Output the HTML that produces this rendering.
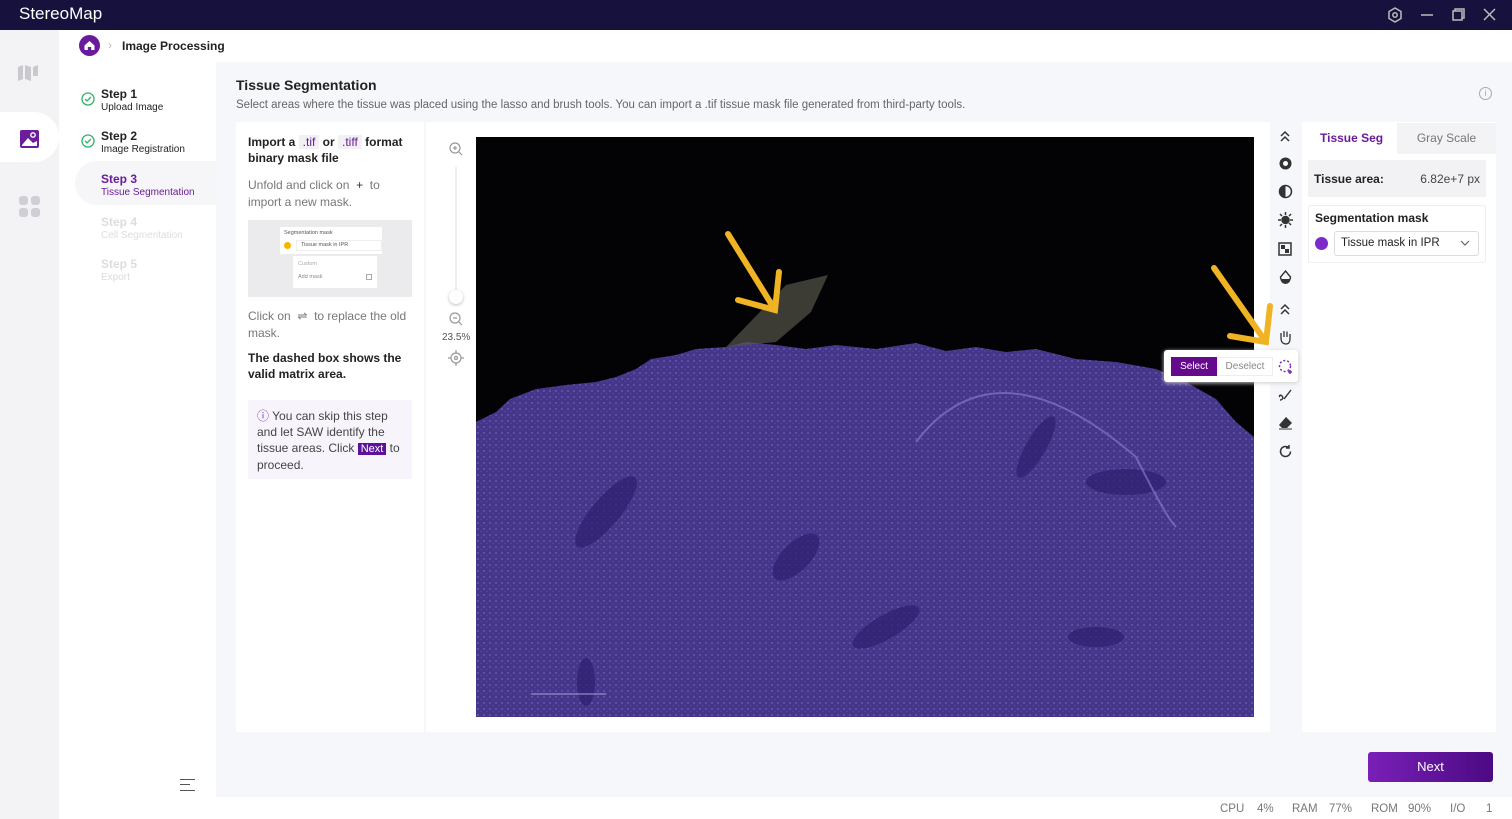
<!DOCTYPE html>
<html><head><meta charset="utf-8"><style>
*{box-sizing:border-box;margin:0;padding:0}
body{width:1512px;height:819px;overflow:hidden;font-family:"Liberation Sans",sans-serif;background:#f6f7fa;position:relative;color:#222}
.a{position:absolute}
.title{left:0;top:0;width:1512px;height:30px;background:#16123d;color:#fff;font-size:17px;padding:4px 19px}
.nav{left:0;top:30px;width:59px;height:789px;background:#f3f3f6}
.steps{left:59px;top:30px;width:157px;height:789px;background:#fff}
.st{position:absolute;left:42px;font-size:12px;font-weight:bold;line-height:13px}
.st small{display:block;font-size:10px;font-weight:normal}
.chk{position:absolute;left:22px}
.card{background:#fff}
.tb svg{position:absolute;left:1278px}
.sb span{position:absolute;top:803px;font-size:11.5px;color:#777;white-space:nowrap}
</style></head><body>
<div class="a title">StereoMap
 <svg class="a" style="left:1388px;top:7px" width="110" height="16" fill="none" stroke="#bbb" stroke-width="1.5"><path d="M7 1l6 3.5v7L7 15l-6-3.5v-7z"/><circle cx="7" cy="8" r="2.2"/><path d="M33 8h12"/><rect x="65" y="4" width="9" height="9"/><path d="M67 4V2h9v9h-2"/><path d="M96 2l11 11M107 2L96 13"/></svg>
</div>
<div class="a nav">
 <svg class="a" style="left:18px;top:35px" width="22" height="16" fill="#c9c9cf"><path d="M0 2l5-2v14l-5 2zM7 0l6 2v14l-6-2zM15 2l5-2v11h-5z"/></svg>
 <div class="a" style="left:0;top:82px;width:59px;height:50px;background:#fff;border-radius:0 25px 25px 0"></div>
 <svg class="a" style="left:20px;top:100px" width="19" height="18"><rect width="19" height="18" rx="2" fill="#6b1e9c"/><path d="M2 15l6-7 5 5 4-2v5H2z" fill="#fff"/><circle cx="13" cy="5" r="2.2" fill="none" stroke="#fff" stroke-width="1.4"/></svg>
 <svg class="a" style="left:19px;top:166px" width="21" height="21" fill="#cfcfd5"><rect width="9" height="9" rx="3"/><rect x="12" width="9" height="9" rx="3"/><rect y="12" width="9" height="9" rx="3"/><rect x="12" y="12" width="9" height="9" rx="3"/></svg>
</div>
<div class="a steps">
 <div class="a" style="left:16px;top:131px;width:141px;height:44px;background:#f6f6f9;border-radius:22px 0 0 22px"></div>
 <svg class="chk" style="top:62px" width="14" height="14" fill="none" stroke="#2fb36b" stroke-width="1.3"><circle cx="7" cy="7" r="6"/><path d="M4 7l2 2 4-4"/></svg><div class="st" style="top:58px">Step 1<small>Upload Image</small></div>
 <svg class="chk" style="top:104px" width="14" height="14" fill="none" stroke="#2fb36b" stroke-width="1.3"><circle cx="7" cy="7" r="6"/><path d="M4 7l2 2 4-4"/></svg><div class="st" style="top:100px">Step 2<small>Image Registration</small></div>
 <div class="st" style="top:143px;color:#6a1b9a">Step 3<small>Tissue Segmentation</small></div>
 <div class="st" style="top:186px;color:#ddd">Step 4<small>Cell Segmentation</small></div>
 <div class="st" style="top:228px;color:#ddd">Step 5<small>Export</small></div>
 <div class="a" style="left:121px;top:749px;width:15px;height:12px;border-top:1.5px solid #555;border-bottom:1.5px solid #555"><div style="margin-top:4px;width:10px;border-top:1.5px solid #555"></div></div>
</div>
<div class="a" style="left:216px;top:30px;width:1296px;height:32px;background:#fff"></div>
<div class="a" style="left:79px;top:35px;width:21px;height:21px;border-radius:50%;background:#6a1b9a"><svg width="21" height="21"><path d="M5.5 10.5L10.5 6l5 4.5V15h-3.3v-3h-3.4v3H5.5z" fill="#fff"/></svg></div>
<div class="a" style="left:108px;top:38px;font-size:12px;color:#bbb">›</div>
<div class="a" style="left:122px;top:39px;font-size:12px;font-weight:bold">Image Processing</div>
<div class="a" style="left:236px;top:77px;font-size:14px;font-weight:bold">Tissue Segmentation</div>
<div class="a" style="left:236px;top:99px;font-size:11.5px;color:#666">Select areas where the tissue was placed using the lasso and brush tools. You can import a .tif tissue mask file generated from third-party tools.</div>
<div class="a" style="left:1479px;top:87px;width:13px;height:13px;border:1px solid #aaa;border-radius:50%;font-size:9px;color:#aaa;text-align:center;line-height:11px">i</div>

<div class="a card" style="left:236px;top:122px;width:188px;height:610px"></div>
<div class="a" style="left:248px;top:134px;width:168px;font-size:12px;line-height:16px">
 <b>Import a <span style="background:#f1f1f4;color:#6a1b9a;padding:0 4px;font-weight:normal">.tif</span> or <span style="background:#f1f1f4;color:#6a1b9a;padding:0 4px;font-weight:normal">.tiff</span> format binary mask file</b>
 <div style="color:#777;margin-top:11px;line-height:17px">Unfold and click on &nbsp;<span style="color:#333">+</span>&nbsp; to import a new mask.</div>
 <div style="margin-top:9px;width:164px;height:77px;background:#ebebed;position:relative;font-size:5.5px;line-height:7px;color:#555">
  <div class="a" style="left:32px;top:7px;width:102px;height:27px;background:#fff;padding:3px 4px">Segmentation mask
   <div style="margin-top:5px;position:relative"><span style="position:absolute;left:0;top:0;width:7px;height:7px;border-radius:50%;background:#f7b500"></span><span style="position:absolute;left:12px;top:-2px;width:86px;height:11px;border:1px solid #eee;padding:1px 4px">Tissue mask in IPR</span></div></div>
  <div class="a" style="left:45px;top:36px;width:84px;height:32px;background:#fff;padding:5px 5px;color:#aaa">Custom<div style="margin-top:6px;color:#888">Add mask<span style="float:right;border:1px solid #aaa;width:6px;height:6px"></span></div></div>
 </div>
 <div style="color:#777;margin-top:11px;line-height:17px">Click on &nbsp;⇌&nbsp; to replace the old mask.</div>
 <b style="display:block;margin-top:8px">The dashed box shows the valid matrix area.</b>
</div>
<div class="a" style="left:248px;top:400px;width:164px;height:79px;background:#f7f5fb;padding:8px 9px;font-size:12px;line-height:16px;color:#444"><span style="color:#7b2bb0">ⓘ</span> You can skip this step and let SAW identify the tissue areas. Click <span style="background:#5a139a;color:#fff;padding:0 3px;font-size:11px">Next</span> to proceed.</div>

<div class="a card" style="left:426px;top:122px;width:844px;height:610px"></div>
<svg class="a" style="left:448px;top:141px" width="16" height="225" fill="none" stroke="#999" stroke-width="1.2"><circle cx="7" cy="7" r="5"/><path d="M11 11l3 3M5 7h4M7 5v4"/><path d="M8 26v130" stroke="#eee" stroke-width="2"/><circle cx="7" cy="177" r="5"/><path d="M11 181l3 3M5 177h4"/><circle cx="8" cy="217" r="5"/><circle cx="8" cy="217" r="1.5"/><path d="M8 209v3M8 222v3M0 217h3M13 217h3"/></svg>
<div class="a" style="left:449px;top:290px;width:14px;height:14px;border-radius:50%;background:#fff;box-shadow:0 1px 3px #bbb"></div>
<div class="a" style="left:442px;top:332px;font-size:10px;color:#555">23.5%</div>

<svg class="a" style="left:476px;top:137px" width="778" height="580">
 <defs>
  <pattern id="p" width="6" height="6" patternUnits="userSpaceOnUse"><rect width="6" height="6" fill="#45368a"/><circle cx="2" cy="2" r="1" fill="#6655ad"/><circle cx="5" cy="4.5" r=".7" fill="#5748a2"/></pattern>
 </defs>
 <rect width="778" height="580" fill="#030205"/>
 <path d="M0 285 L20 275 L34 262 L60 252 L90 248 L120 245 L140 240 L160 232 L175 222 L200 218 L220 212 L250 210 L270 205 L300 208 L330 212 L360 208 L400 212 L440 206 L470 214 L500 210 L530 215 L560 212 L600 222 L640 225 L680 232 L710 245 L740 262 L760 285 L778 300 L778 580 L0 580Z" fill="url(#p)"/>
 <g fill="#2d1f6e" opacity=".7">
  <ellipse cx="0" cy="0" rx="14" ry="45" transform="translate(130 375) rotate(40)"/>
  <ellipse cx="0" cy="0" rx="10" ry="35" transform="translate(560 310) rotate(30)"/>
  <ellipse cx="650" cy="345" rx="40" ry="13"/>
  <ellipse cx="0" cy="0" rx="14" ry="30" transform="translate(320 420) rotate(45)"/>
  <ellipse cx="0" cy="0" rx="12" ry="38" transform="translate(410 490) rotate(60)"/>
  <ellipse cx="620" cy="500" rx="28" ry="10"/>
  <ellipse cx="110" cy="545" rx="9" ry="24"/>
 </g>
 <path d="M250 210 L310 148 L352 138 L335 175 L300 205Z" fill="#555548" opacity=".7"/>
 <path d="M440 305 Q520 200 660 320 Q690 380 700 390" stroke="#9080d5" stroke-width="2" fill="none" opacity=".6"/>
 <path d="M55 557h75" stroke="#a9a0dd"/>
</svg>
<svg class="a" style="left:720px;top:228px" width="70" height="90" fill="none" stroke="#f0b323" stroke-width="6" stroke-linecap="round"><path d="M8 6L55 82M18 72l37 10 4-38"/></svg>
<svg class="a" style="left:1208px;top:262px" width="70" height="90" fill="none" stroke="#f0b323" stroke-width="6" stroke-linecap="round"><path d="M6 6L58 80M22 74l36 6 4-36"/></svg>
<div class="a" style="left:1164px;top:350px;width:134px;height:32px;background:#fff;border-radius:3px;box-shadow:0 1px 4px #ccc"></div>
<div class="a" style="left:1171px;top:357px;width:46px;height:19px;background:#650a8f;color:#fff;font-size:10px;text-align:center;line-height:19px">Select</div>
<div class="a" style="left:1217px;top:357px;width:56px;height:19px;border:1px solid #eee;color:#888;font-size:10px;text-align:center;line-height:17px">Deselect</div>

<div class="a tb">
 <svg style="top:129px" width="14" height="14" fill="none" stroke="#333" stroke-width="1.5"><path d="M3 7l4-4 4 4M3 12l4-4 4 4"/></svg>
 <svg style="top:156px" width="15" height="15"><circle cx="7.5" cy="7.5" r="6" fill="#333"/><circle cx="7.5" cy="7.5" r="2.5" fill="#fff"/></svg>
 <svg style="top:184px" width="15" height="15"><circle cx="7.5" cy="7.5" r="6" fill="none" stroke="#333" stroke-width="1.5"/><path d="M7.5 1.5a6 6 0 0 0 0 12z" fill="#333"/></svg>
 <svg style="top:212px" width="15" height="16" stroke="#333" stroke-width="1.5"><circle cx="7.5" cy="8" r="3.5" fill="#333"/><path d="M7.5 0v3M7.5 13v3M0 8h3M12 8h3M2 2l2 2M11 11l2 2M13 2l-2 2M2 14l2-2"/></svg>
 <svg style="top:242px" width="14" height="14"><rect x="1" y="1" width="12" height="12" fill="none" stroke="#333" stroke-width="1.5"/><rect x="3" y="3" width="4" height="4" fill="#333"/><rect x="7" y="7" width="4" height="4" fill="#333"/></svg>
 <svg style="top:270px" width="15" height="15"><path d="M7.5 1L12.5 7a5 5 0 1 1-10 0z" fill="none" stroke="#333" stroke-width="1.4"/><path d="M2.5 9h10a5 5 0 0 1-10 0z" fill="#333"/></svg>
 <svg style="top:302px" width="14" height="14" fill="none" stroke="#333" stroke-width="1.5"><path d="M3 7l4-4 4 4M3 12l4-4 4 4"/></svg>
 <svg style="top:329px" width="15" height="16" fill="none" stroke="#333" stroke-width="1.3"><path d="M3 9V4M6 8V2M9 8V2.5M12 9V5M3 9c0 4 2 6 5 6s4-2 4-6"/></svg>
 <svg style="top:359px" width="16" height="16" fill="none" stroke="#7b2bb0" stroke-width="1.5" stroke-dasharray="2 2"><circle cx="7" cy="7" r="5.5"/><path d="M12 11v4M10 13h4" stroke-dasharray="none"/></svg>
 <svg style="top:387px" width="15" height="15" fill="none" stroke="#333" stroke-width="1.4"><path d="M2 13c2 0 4-2 2-4s-3 0-2 1M6 12l7-9"/></svg>
 <svg style="top:416px" width="15" height="14"><path d="M8 1l6 6-5 5H4L1 9z" fill="#333"/><path d="M1 13h13" stroke="#333"/></svg>
 <svg style="top:444px" width="15" height="15" fill="none" stroke="#333" stroke-width="1.5"><path d="M12.5 7.5a5 5 0 1 1-2-4M11 1v3H8"/></svg>
</div>

<div class="a card" style="left:1302px;top:122px;width:194px;height:610px"></div>
<div class="a" style="left:1397px;top:123px;width:99px;height:31px;background:#f3f3f5;color:#777;font-size:12px;text-align:center;line-height:30px">Gray Scale</div>
<div class="a" style="left:1320px;top:131px;font-size:12px;font-weight:bold;color:#6a1b9a">Tissue Seg</div>
<div class="a" style="left:1308px;top:160px;width:178px;height:37px;background:#f2f2f4;font-size:12px;padding:12px 6px"><b>Tissue area:</b><span style="float:right;color:#444">6.82e+7 px</span></div>
<div class="a" style="left:1308px;top:205px;width:178px;height:58px;border:1px solid #eee;border-radius:3px"></div>
<div class="a" style="left:1315px;top:211px;font-size:12px;font-weight:bold">Segmentation mask</div>
<div class="a" style="left:1315px;top:237px;width:13px;height:13px;border-radius:50%;background:#7b2bc7"></div>
<div class="a" style="left:1334px;top:231px;width:145px;height:25px;border:1px solid #ddd;border-radius:3px;font-size:11.5px;padding:5px 6px">Tissue mask in IPR<svg style="position:absolute;right:8px;top:8px" width="10" height="7" fill="none" stroke="#666" stroke-width="1.2"><path d="M1 1l4 4 4-4"/></svg></div>

<div class="a" style="left:1368px;top:752px;width:125px;height:30px;border-radius:3px;background:linear-gradient(90deg,#7a1fb8,#4b0a82);color:#fff;font-size:13px;text-align:center;line-height:30px">Next</div>
<div class="a" style="left:216px;top:797px;width:1296px;height:22px;background:#fff"></div>
<div class="sb"><span style="left:1220px">CPU</span><span style="left:1257px">4%</span><span style="left:1292px">RAM</span><span style="left:1329px">77%</span><span style="left:1371px">ROM</span><span style="left:1408px">90%</span><span style="left:1450px">I/O</span><span style="left:1486px">1</span></div>
</body></html>
